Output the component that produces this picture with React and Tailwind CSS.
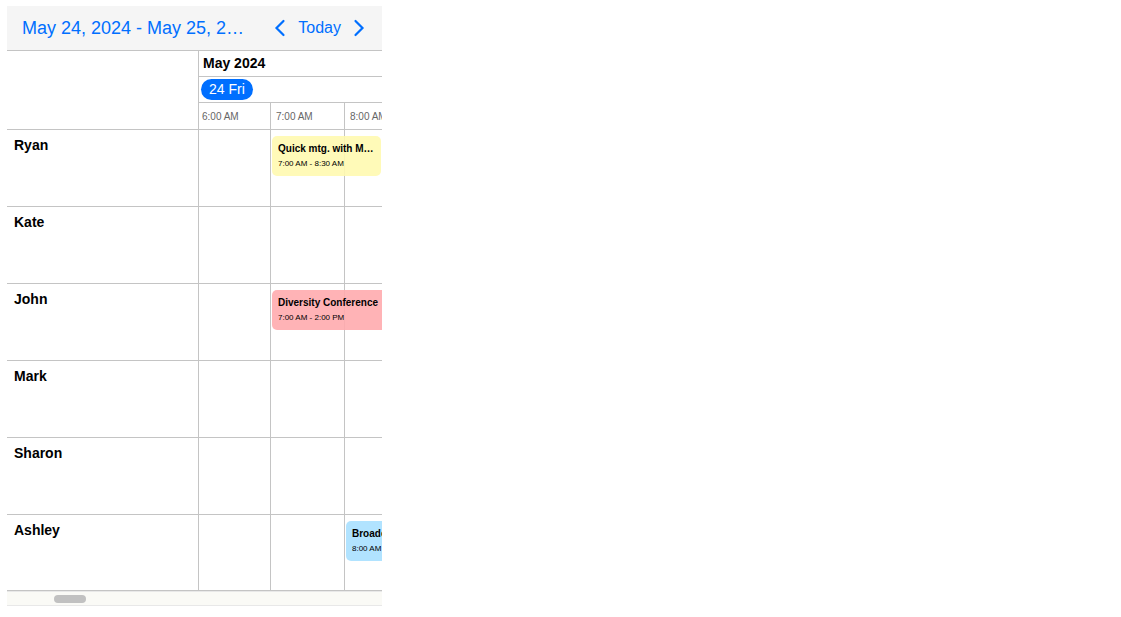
const hours = ["6:00 AM", "7:00 AM", "8:00 AM"];

const people = [
  { name: "Ryan", event: { hour: 1, title: "Quick mtg. with Martin", time: "7:00 AM - 8:30 AM", look: "w-[109px] bg-[#fff9b0]/90" } },
  { name: "Kate" },
  { name: "John", event: { hour: 1, title: "Diversity Conference", time: "7:00 AM - 2:00 PM", look: "w-[516px] bg-[#ffabae]/90" } },
  { name: "Mark" },
  { name: "Sharon" },
  { name: "Ashley", event: { hour: 2, title: "Broadcast Meeting", time: "8:00 AM - 10:00 AM", look: "w-[146px] bg-[#ade2ff]/95" } },
];

function Chevron({ d }) {
  return (
    <svg viewBox="0 0 24 24" className="size-6" fill="none" stroke="currentColor" strokeWidth="2.2" strokeLinecap="round" aria-hidden="true">
      <path d={d} />
    </svg>
  );
}

function Event({ title, time, look }) {
  return (
    <div className={`absolute top-1.5 left-px h-10 rounded-[5px] px-1.5 pt-[7px] text-black ${look}`}>
      <div className="truncate text-[10px] leading-3 font-bold">{title}</div>
      <div className="mt-1 truncate text-[8px] leading-[10px]">{time}</div>
    </div>
  );
}

export default function App() {
  return (
    <main className="mx-[7px] my-1.5 max-w-[375px] overflow-hidden bg-white font-['Liberation_Sans',Arial,sans-serif] text-black">
      <header className="flex h-[45px] items-center border-b border-[#c4c4c4] bg-[#f5f5f5] pr-[11px] pl-[15px] text-[#006fff]">
        <button className="min-w-0 flex-1 truncate text-left text-lg">May 24, 2024 - May 25, 2024</button>
        <nav className="ml-[22px] flex shrink-0 items-center">
          <button aria-label="Previous">
            <Chevron d="M15.5 5 8.5 12l7 7" />
          </button>
          <button className="mx-1.5 text-base">Today</button>
          <button aria-label="Next">
            <Chevron d="M8.5 5l7 7-7 7" />
          </button>
        </nav>
      </header>

      <table className="w-full table-fixed border-separate border-spacing-0 text-left text-sm">
        <colgroup>
          <col className="w-48" />
          <col className="w-[72px]" />
          <col className="w-[74px]" />
          <col />
        </colgroup>
        <thead>
          <tr className="h-[26px]">
            <td rowSpan={3} className="border-r border-b border-[#c4c4c4]" />
            <th colSpan={3} className="border-b border-[#c4c4c4] pb-0.5 pl-1 leading-5 font-bold">May 2024</th>
          </tr>
          <tr className="h-[26px]">
            <th colSpan={3} className="border-b border-[#c4c4c4] pl-0.5 font-normal">
              <span className="block h-[21px] w-fit rounded-full bg-[#006fff] px-2 leading-[21px] text-white">24 Fri</span>
            </th>
          </tr>
          <tr className="h-[27px]">
            {hours.map((hour, i) => (
              <th
                key={hour}
                scope="col"
                className={`border-b border-[#c4c4c4] pt-0.5 text-[10px] leading-4 font-normal whitespace-nowrap text-[#666] ${i === 0 ? "pl-[3px]" : "pl-[5px]"} ${i < 2 ? "border-r" : ""}`}
              >
                {hour}
              </th>
            ))}
          </tr>
        </thead>
        <tbody>
          {people.map(({ name, event }) => (
            <tr key={name} className="h-[77px] last:h-[76px]">
              <th scope="row" className="border-r border-b border-[#c4c4c4] pt-[5px] pl-[7px] align-top leading-5 font-bold">
                {name}
              </th>
              {hours.map((hour, i) => (
                <td key={hour} className={`relative border-b border-[#c4c4c4] p-0 ${i < 2 ? "border-r" : ""}`}>
                  {event?.hour === i && <Event {...event} />}
                </td>
              ))}
            </tr>
          ))}
        </tbody>
      </table>

      <div className="flex h-[15px] items-center border-y border-[#e8e8e8] bg-[#fafaf6] pl-[47px]">
        <div className="h-2 w-8 rounded-full bg-[#c1c1c1]" />
      </div>
    </main>
  );
}
